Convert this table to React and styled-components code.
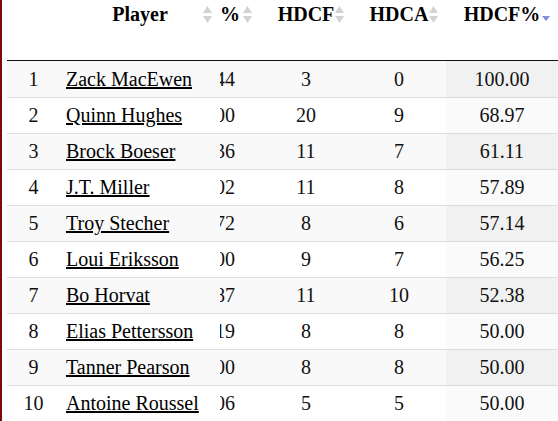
import React from "react";
import styled, { createGlobalStyle } from "styled-components";

const rows = [
  { rank: 1, name: "Zack MacEwen", pct: "46.44", hdcf: 3, hdca: 0, hdcfPct: "100.00" },
  { rank: 2, name: "Quinn Hughes", pct: "54.00", hdcf: 20, hdca: 9, hdcfPct: "68.97" },
  { rank: 3, name: "Brock Boeser", pct: "48.36", hdcf: 11, hdca: 7, hdcfPct: "61.11" },
  { rank: 4, name: "J.T. Miller", pct: "52.02", hdcf: 11, hdca: 8, hdcfPct: "57.89" },
  { rank: 5, name: "Troy Stecher", pct: "51.72", hdcf: 8, hdca: 6, hdcfPct: "57.14" },
  { rank: 6, name: "Loui Eriksson", pct: "47.00", hdcf: 9, hdca: 7, hdcfPct: "56.25" },
  { rank: 7, name: "Bo Horvat", pct: "53.87", hdcf: 11, hdca: 10, hdcfPct: "52.38" },
  { rank: 8, name: "Elias Pettersson", pct: "55.19", hdcf: 8, hdca: 8, hdcfPct: "50.00" },
  { rank: 9, name: "Tanner Pearson", pct: "49.00", hdcf: 8, hdca: 8, hdcfPct: "50.00" },
  { rank: 10, name: "Antoine Roussel", pct: "50.06", hdcf: 5, hdca: 5, hdcfPct: "50.00" },
];

const SortBoth = () => (
  <svg width="9" height="17" viewBox="0 0 9 17">
    <polygon points="4.5,0 9,7 0,7" fill="#d2d2d2" />
    <polygon points="0,10 9,10 4.5,17" fill="#d2d2d2" />
  </svg>
);

const SortDesc = () => (
  <svg width="8" height="5" viewBox="0 0 8 5">
    <polygon points="0,0 8,0 4,5" fill="#838ad6" />
  </svg>
);

const App = () => {
  return (
    <>
      <GlobalStyle />
      <Page>
        <Table>
          <colgroup>
            <col style={{ width: 53 }} />
            <col style={{ width: 160 }} />
            <col style={{ width: 40 }} />
            <col style={{ width: 92 }} />
            <col style={{ width: 94 }} />
            <col />
          </colgroup>
          <thead>
            <tr>
              <Th>
                <HeadInner />
              </Th>
              <Th>
                <HeadInner>
                  Player
                  <SortMark><SortBoth /></SortMark>
                </HeadInner>
              </Th>
              <Th>
                <HeadInner $clip>
                  %
                  <SortMark><SortBoth /></SortMark>
                </HeadInner>
              </Th>
              <Th>
                <HeadInner>
                  HDCF
                  <SortMark><SortBoth /></SortMark>
                </HeadInner>
              </Th>
              <Th>
                <HeadInner>
                  HDCA
                  <SortMark><SortBoth /></SortMark>
                </HeadInner>
              </Th>
              <Th>
                <HeadInner>
                  HDCF%
                  <SortMark $desc><SortDesc /></SortMark>
                </HeadInner>
              </Th>
            </tr>
          </thead>
          <tbody>
            {rows.map((r) => (
              <Row key={r.rank}>
                <Td>{r.rank}</Td>
                <Td $left>
                  <PlayerLink href="#">{r.name}</PlayerLink>
                </Td>
                <Td>
                  <ClipBox>
                    <span>{r.pct}</span>
                  </ClipBox>
                </Td>
                <Td>{r.hdcf}</Td>
                <Td>{r.hdca}</Td>
                <Td $sorted>{r.hdcfPct}</Td>
              </Row>
            ))}
          </tbody>
        </Table>
      </Page>
    </>
  );
};

export default App;

// Styled Components
const serif = `"Liberation Serif", "Times New Roman", Tinos, serif`;

const GlobalStyle = createGlobalStyle`
  html, body {
    margin: 0;
    padding: 0;
    background: #fff;
    overflow: hidden;
  }
  body {
    font-family: ${serif};
    color: #111;
  }
`;

const Page = styled.div`
  border-left: 2px solid #7d0808;
  padding-left: 5px;
  height: 421px;
  box-sizing: border-box;
`;

const Table = styled.table`
  width: 100%;
  table-layout: fixed;
  border-collapse: separate;
  border-spacing: 0;
  font-family: ${serif};
  font-size: 20px;
`;

const Th = styled.th`
  padding: 0;
  border-bottom: 1px solid #111;
  vertical-align: top;
  font-family: ${serif};
  font-weight: bold;
  color: #000;
`;

const HeadInner = styled.div`
  position: relative;
  height: 60px;
  box-sizing: border-box;
  padding-top: 3px;
  line-height: 23px;
  white-space: nowrap;
  text-align: ${(p) => (p.$clip ? "right" : "center")};
  padding-right: ${(p) => (p.$clip ? "20px" : "0")};
`;

const SortMark = styled.span`
  position: absolute;
  right: 8px;
  top: ${(p) => (p.$desc ? "14px" : "6px")};
  line-height: 0;
`;

const Row = styled.tr`
  td {
    background: #fff;
  }
  &:nth-child(odd) td {
    background: #f9f9f9;
  }
  &:nth-child(odd) td:last-child {
    background: #f1f1f1;
  }
  &:nth-child(even) td:last-child {
    background: #fafafa;
  }
  &:first-child td {
    border-top: none;
    line-height: 36px;
  }
`;

const Td = styled.td`
  padding: 0;
  padding-left: ${(p) => (p.$left ? "6px" : "0")};
  border-top: 1px solid #ddd;
  font-family: ${serif};
  line-height: 35px;
  text-align: ${(p) => (p.$left ? "left" : "center")};
  white-space: nowrap;
  color: #111;
`;

const ClipBox = styled.div`
  display: flex;
  justify-content: flex-end;
  overflow: hidden;
  padding-right: 25px;
  white-space: nowrap;
`;

const PlayerLink = styled.a`
  color: #000;
  text-decoration: underline;
`;
